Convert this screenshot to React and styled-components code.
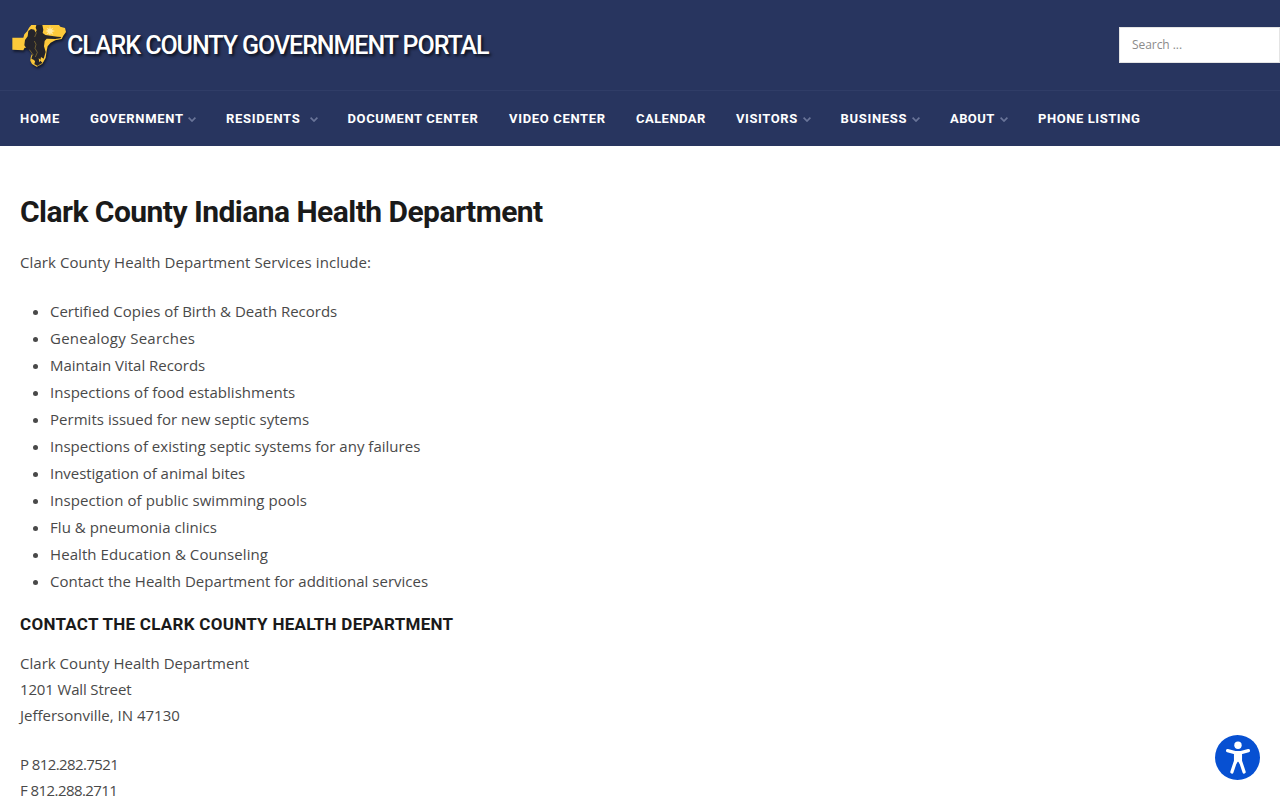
import React from 'react';
import styled, { createGlobalStyle } from 'styled-components';

const GlobalStyle = createGlobalStyle`
    * {
        box-sizing: border-box;
    }
    body {
        margin: 0;
        height: 800px;
        overflow: hidden;
        background: #fff;
        color: #494949;
        font: 15px/26px 'Open Sans', sans-serif;
    }
`;

const Header = styled.header`
    background: #28355f;
`;
const Masthead = styled.div`
    display: flex;
    align-items: center;
    justify-content: space-between;
    height: 90px;
    padding-left: 11px;
`;
const Brand = styled.a`
    display: flex;
    align-items: center;
    color: #fff;
    text-decoration: none;
`;
const BrandMark = styled.svg`
    width: 56px;
    height: 46px;
    margin-top: 2px;
    overflow: visible;
    filter: drop-shadow(1px 2px 1px rgba(0,0,0,0.5));
`;
const BrandName = styled.span`
    padding-top: 2px;
    font: 500 25px/30px Roboto, sans-serif;
    letter-spacing: -1.04px;
    white-space: nowrap;
    text-shadow: 2px 2px 3px rgba(0,0,0,0.7);
`;
const SearchInput = styled.input`
    width: 161px;
    height: 36px;
    padding: 0 12px 1px;
    border: 1px solid #e4e4e4;
    border-radius: 0;
    background: #fff;
    font: 12px 'Open Sans', sans-serif;
    letter-spacing: -0.06px;
    &::placeholder {
        color: #8b8b8b;
        opacity: 1;
    }
`;
const Nav = styled.nav`
    display: flex;
    gap: 30px;
    height: 56px;
    padding: 0 20px;
    border-top: 1px solid #303d67;
`;
const NavItem = styled.a`
    display: flex;
    flex: none;
    align-items: center;
    justify-content: space-between;
    width: ${props => props.$width}px;
    color: #fff;
    font: 700 13px/20px Roboto, sans-serif;
    letter-spacing: ${props => props.$track}px;
    text-decoration: none;
    text-transform: uppercase;
    white-space: nowrap;
`;
const Arrow = styled.svg`
    flex: none;
    width: 8px;
    height: 5px;
    margin-top: 1px;
    fill: none;
    stroke: #6a7599;
    stroke-width: 1.7;
`;
const Main = styled.main`
    padding: 46px 20px 0;
`;
const PageTitle = styled.h1`
    margin: 0 0 17px;
    color: #1a1a1a;
    font: 700 30px/40px Roboto, sans-serif;
    letter-spacing: -0.54px;
`;
const Paragraph = styled.p`
    margin: 0 0 23px;
`;
const Line = styled.span`
    display: block;
    letter-spacing: ${props => props.$track || 0}px;
    white-space: nowrap;
`;
const List = styled.ul`
    margin: 0 0 16px;
    padding: 0 0 0 30px;
    line-height: 27px;
`;
const ListItem = styled.li`
    letter-spacing: ${props => props.$track}px;
`;
const SubTitle = styled.h3`
    margin: 0 0 13px;
    color: #1a1a1a;
    font: 700 17px/26px Roboto, sans-serif;
    letter-spacing: 0.27px;
    text-transform: uppercase;
`;
const AccessButton = styled.button`
    position: fixed;
    right: 20px;
    bottom: 20px;
    width: 45px;
    height: 45px;
    padding: 0;
    border: 0;
    border-radius: 50%;
    background: #0750d2;
    svg {
        display: block;
    }
`;

const menu = [
    { label: 'Home', width: 40, track: 0.85 },
    { label: 'Government', width: 106, track: 0.7, sub: true },
    { label: 'Residents', width: 91.5, track: 0.7, sub: true },
    { label: 'Document Center', width: 131.5, track: 0.62 },
    { label: 'Video Center', width: 97, track: 0.67 },
    { label: 'Calendar', width: 70, track: 0.45 },
    { label: 'Visitors', width: 74.5, track: 0.58, sub: true },
    { label: 'Business', width: 79.5, track: 0.7, sub: true },
    { label: 'About', width: 58, track: 0.4, sub: true },
    { label: 'Phone Listing', width: 103, track: 0.57 },
];

const services = [
    ['Certified Copies of Birth & Death Records', -0.01],
    ['Genealogy Searches', 0.25],
    ['Maintain Vital Records', -0.03],
    ['Inspections of food establishments', 0.03],
    ['Permits issued for new septic sytems', 0.03],
    ['Inspections of existing septic systems for any failures', 0.012],
    ['Investigation of animal bites', -0.04],
    ['Inspection of public swimming pools', 0.08],
    ['Flu & pneumonia clinics', 0.06],
    ['Health Education & Counseling', 0.08],
    ['Contact the Health Department for additional services', 0.014],
];

const CountyMark = () => (
    <BrandMark viewBox="33 24 168 138">
        <path
            fill="#fdc93a"
            d="M37 68H70L73 58L82 48L87 38L94 30H177L181 35L195 39L198 51L190 62L185 72L166 76L152 83L143 94L140 108L137 128L127 146L110 155L96 147L91 137L93 124L97 115L87 99L74 98L70 106L37 104Z"
        />
        <path
            fill="#ffe9a0"
            d="M150 31L152 42L160 38L156 45L165 48L156 51L160 59L152 55L150 63L147 55L139 59L144 51L136 48L144 45L140 38L148 42Z"
        />
        <path
            fill="#25242a"
            d="M109 30H127L130 44L128 54L136 60L172 65L184 66L181 70L166 72L140 71L134 78L132 94L137 111L131 131L123 126L121 137L128 144L113 153L103 148L105 139L94 131L97 119L88 104L79 100L73 91L75 75L83 64L85 48L93 42L103 44L107 52L110 46L107 38Z"
        />
        <path
            fill="none"
            stroke="#dfb63b"
            strokeWidth="1.2"
            d="M104 44L109 54L104 66M103 78L108 88L105 100L112 112L106 126M88 104L99 119L93 127L94 138L102 148L112 153L126 145L135 130"
        />
        <path fill="#fdc93a" d="M97 132L103 136L104 142L98 140ZM116 130L123 135L118 142Z" />
    </BrandMark>
);

export default function App() {
    return (
        <>
            <GlobalStyle />
            <Header>
                <Masthead>
                    <Brand href="#">
                        <CountyMark />
                        <BrandName>CLARK COUNTY GOVERNMENT PORTAL</BrandName>
                    </Brand>
                    <SearchInput type="text" placeholder="Search ..." />
                </Masthead>
                <Nav>
                    {menu.map(item => (
                        <NavItem href="#" key={item.label} $width={item.width} $track={item.track}>
                            {item.label}
                            {item.sub && (
                                <Arrow viewBox="0 0 8 5">
                                    <path d="M0.6 0.6L4 4L7.4 0.6" />
                                </Arrow>
                            )}
                        </NavItem>
                    ))}
                </Nav>
            </Header>
            <Main>
                <PageTitle>Clark County Indiana Health Department</PageTitle>
                <Paragraph>
                    <Line $track={0.072}>Clark County Health Department Services include:</Line>
                </Paragraph>
                <List>
                    {services.map(([text, track]) => (
                        <ListItem key={text} $track={track}>{text}</ListItem>
                    ))}
                </List>
                <SubTitle>Contact the Clark County Health Department</SubTitle>
                <Paragraph>
                    <Line $track={0.024}>Clark County Health Department</Line>
                    <Line $track={-0.15}>1201 Wall Street</Line>
                    <Line>Jeffersonville, IN 47130</Line>
                </Paragraph>
                <Paragraph>
                    <Line $track={-0.6}>P 812.282.7521</Line>
                    <Line $track={-0.57}>F 812.288.2711</Line>
                </Paragraph>
            </Main>
            <AccessButton aria-label="Accessibility">
                <svg width="45" height="45" viewBox="0 0 45 45" fill="#fff">
                    <circle cx="23" cy="10.3" r="3.7" />
                    <path
                        d="M12.6 15.6L20 17.6H26L33.4 15.6M20.6 18V26L16.9 37M25.4 18V26L29.1 37"
                        fill="none"
                        stroke="#fff"
                        strokeWidth="3.3"
                        strokeLinecap="round"
                        strokeLinejoin="round"
                    />
                    <path d="M19.5 17H26.5L27 27.5L25 29L23 26.5L21 29L19 27.5Z" />
                </svg>
            </AccessButton>
        </>
    );
}
